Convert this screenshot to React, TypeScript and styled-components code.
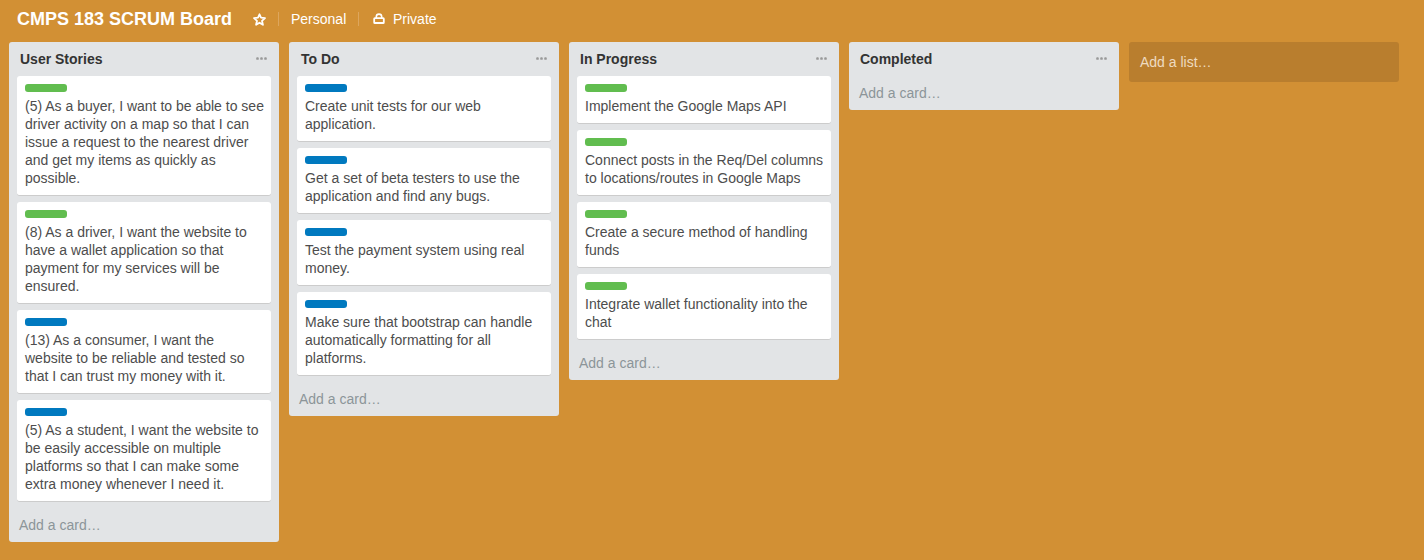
import React from 'react';
import styled, { createGlobalStyle } from 'styled-components';

const GlobalStyle = createGlobalStyle`
  * { box-sizing: border-box; }
  body {
    margin: 0;
    background: #d29034;
    font: 14px/18px "Liberation Sans", Arial, sans-serif;
    color: #4d4d4d;
  }
`;

const Board = styled.main`
  height: 560px;
  overflow: hidden;
  background: #d29034;
`;

const BoardHeader = styled.header`
  display: flex;
  align-items: center;
  height: 42px;
  padding: 0 17px 4px;
  color: #fff;
`;

const BoardTitle = styled.h1`
  width: 236px;
  margin: 0;
  font-size: 18px;
  line-height: 24px;
  font-weight: 700;
  white-space: nowrap;
`;

const TitleText = styled.span`
  display: inline-block;
`;

const HeaderItem = styled.span<{ $width?: number }>`
  display: flex;
  align-items: center;
  width: ${({ $width }) => ($width ? `${$width}px` : 'auto')};
  white-space: nowrap;
`;

const Divider = styled.span`
  width: 1px;
  height: 14px;
  margin-right: 12px;
  background: #dda65d;
`;

const LockIcon = styled.svg`
  margin: 0 8px 0 2px;
`;

const Lists = styled.div`
  display: flex;
  align-items: flex-start;
  gap: 10px;
  padding-left: 9px;
`;

const ListPanel = styled.section`
  flex: none;
  width: 270px;
  padding: 0 8px;
  border-radius: 3px;
  background: #e2e4e6;
`;

const ListHeader = styled.div`
  display: flex;
  align-items: center;
  justify-content: space-between;
  height: 34px;
  padding: 0 4px 0 3px;
`;

const ListTitle = styled.h2<{ $inset?: number }>`
  margin: 0;
  padding-left: ${({ $inset }) => $inset ?? 0}px;
  font-size: 14px;
  line-height: 18px;
  font-weight: 700;
  color: #333;
`;

const Card = styled.article`
  margin-bottom: 6px;
  padding: 8px 0 8px 8px;
  border-bottom: 1px solid #ccc;
  border-radius: 3px;
  background: #fff;
  background-clip: padding-box;
`;

const Label = styled.div<{ $color: string }>`
  width: 42px;
  height: 8px;
  margin-bottom: 5px;
  border-radius: 3px;
  background: ${({ $color }) => $color};
`;

const CardText = styled.p`
  margin: 0;
  white-space: pre-line;
`;

const AddCard = styled.div`
  height: 34px;
  padding: 8px 2px;
  color: #8c9599;
`;

const AddList = styled.div`
  flex: none;
  width: 270px;
  height: 40px;
  padding: 11px;
  border-radius: 3px;
  background: #b97e2e;
  color: #eedbc0;
`;

const GREEN = '#61bd4f';
const BLUE = '#0079bf';

interface ListData {
  title: string;
  inset?: number;
  color: string;
  cards: string[];
}

const lists: ListData[] = [
  {
    title: 'User Stories',
    color: GREEN,
    cards: [
      '(5) As a buyer, I want to be able to see\ndriver activity on a map so that I can\nissue a request to the nearest driver\nand get my items as quickly as\npossible.',
      '(8) As a driver, I want the website to\nhave a wallet application so that\npayment for my services will be\nensured.',
      '(13) As a consumer, I want the\nwebsite to be reliable and tested so\nthat I can trust my money with it.',
      '(5) As a student, I want the website to\nbe easily accessible on multiple\nplatforms so that I can make some\nextra money whenever I need it.',
    ],
  },
  {
    title: 'To Do',
    inset: 1,
    color: BLUE,
    cards: [
      'Create unit tests for our web\napplication.',
      'Get a set of beta testers to use the\napplication and find any bugs.',
      'Test the payment system using real\nmoney.',
      'Make sure that bootstrap can handle\nautomatically formatting for all\nplatforms.',
    ],
  },
  {
    title: 'In Progress',
    color: GREEN,
    cards: [
      'Implement the Google Maps API',
      'Connect posts in the Req/Del columns\nto locations/routes in Google Maps',
      'Create a secure method of handling\nfunds',
      'Integrate wallet functionality into the\nchat',
    ],
  },
  { title: 'Completed', color: GREEN, cards: [] },
];

const labelColor = (list: ListData, index: number) =>
  list.title === 'User Stories' && index > 1 ? BLUE : list.color;

const MenuDots = () => (
  <svg width="11" height="4" viewBox="0 0 11 4" fill="#999">
    <rect x="0.2" y="0.3" width="2.6" height="2.5" rx="0.9" />
    <rect x="4.2" y="0.3" width="2.6" height="2.5" rx="0.9" />
    <rect x="8.2" y="0.3" width="2.6" height="2.5" rx="0.9" />
  </svg>
);

export default function App() {
  return (
    <Board>
      <GlobalStyle />
      <BoardHeader>
        <BoardTitle>
          <TitleText>CMPS 183 SCRUM Board</TitleText>
        </BoardTitle>
        <HeaderItem $width={25}>
          <svg width="13" height="13" viewBox="0 0 13 13" fill="none" stroke="#fff" strokeWidth="1.8" strokeLinejoin="round">
            <path d="M6.5 1.3 8 4.7l4 .4-3 2.7.9 4-3.4-2.1-3.4 2.1.9-4-3-2.7 4-.4z" />
          </svg>
        </HeaderItem>
        <Divider />
        <HeaderItem $width={67}>Personal</HeaderItem>
        <Divider />
        <HeaderItem>
          <LockIcon width="12" height="12" viewBox="0 0 12 12" fill="none" stroke="#fff" strokeWidth="1.8">
            <rect x="1.2" y="5.1" width="9.6" height="4.9" rx="0.6" />
            <path d="M3.3 5.1V3.8a2.7 2.7 0 0 1 5.4 0v1.3" strokeWidth="1.6" />
          </LockIcon>
          Private
        </HeaderItem>
      </BoardHeader>
      <Lists>
        {lists.map((list) => (
          <ListPanel key={list.title}>
            <ListHeader>
              <ListTitle $inset={list.inset}>{list.title}</ListTitle>
              <MenuDots />
            </ListHeader>
            {list.cards.map((text, index) => (
              <Card key={text}>
                <Label $color={labelColor(list, index)} />
                <CardText>{text}</CardText>
              </Card>
            ))}
            <AddCard>Add a card…</AddCard>
          </ListPanel>
        ))}
        <AddList>Add a list…</AddList>
      </Lists>
    </Board>
  );
}
